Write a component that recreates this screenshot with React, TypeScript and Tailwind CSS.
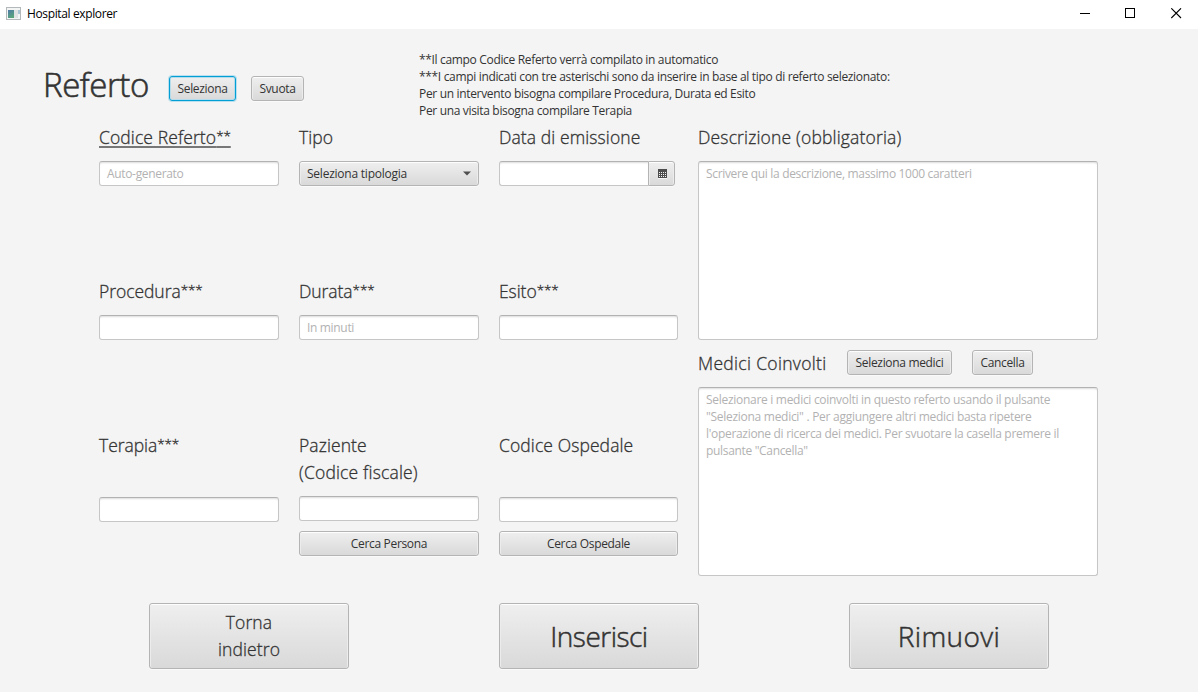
import type { ReactNode } from "react";

const fill = "rounded-[3px] bg-linear-to-b from-[#efefef] to-[#d9d9d9]";

const edge =
  "border border-[#b4b4b4] shadow-[inset_0_1px_0_#fdfdfd,inset_1px_0_0_#ececec,inset_-1px_0_0_#ececec,0_1px_0_#fafafa]";

const focused = "border border-[#039ed3] shadow-[inset_0_0_0_1px_#b5dcea,0_0_0_1px_#b9e0ee]";

const field =
  "border border-[#c6c6c6] border-t-[#b2b2b2] rounded-[3px] bg-white shadow-[inset_0_2px_2px_-1px_#dcdcdc]";

const small = "text-[12px] tracking-[-0.33px]";

const medium = "text-[17.5px] leading-[27px] font-light [-webkit-text-stroke:0.3px_#333333]";

const large = "text-[28px] font-light [-webkit-text-stroke:0.5px_#333333]";

function Button({ children, className = "", focus = false }: { children: ReactNode; className?: string; focus?: boolean }) {
  return (
    <button
      className={`${fill} ${focus ? focused : edge} ${small} flex h-[25px] shrink-0 items-center justify-center whitespace-nowrap ${className}`}
    >
      {children}
    </button>
  );
}

function Stars({ children }: { children: string }) {
  return <span className="align-[2.6px] text-[13.5px] leading-none tracking-[-0.15px]">{children}</span>;
}

function Label({
  children,
  stars = "",
  spacing = "tracking-[0.1px]",
  className = "",
}: {
  children: ReactNode;
  stars?: string;
  spacing?: string;
  className?: string;
}) {
  return (
    <div className={`${medium} ${spacing} h-[27px] whitespace-nowrap ${className}`}>
      {children}
      {stars && <Stars>{stars}</Stars>}
    </div>
  );
}

function TextField({ hint = "", className = "" }: { hint?: string; className?: string }) {
  return (
    <div className={`${field} ${small} flex h-[25px] shrink-0 items-center px-[7px] pt-px text-[#b2b2b2] ${className}`}>
      {hint}
    </div>
  );
}

function TitleBar() {
  return (
    <header className="flex h-[29px] shrink-0 items-center bg-white text-black">
      <svg width="15" height="13" viewBox="0 0 15 13" className="mb-[3px] ml-[6px]" shapeRendering="crispEdges">
        <defs>
          <linearGradient id="pane" x1="0" y1="0" x2="0.5" y2="1">
            <stop offset="0" stopColor="#4f79a8" />
            <stop offset="1" stopColor="#58a57c" />
          </linearGradient>
        </defs>
        <rect x="0.5" y="0.5" width="14" height="12" fill="#f3f4f4" stroke="#b3b9bb" />
        <rect x="2" y="3" width="6" height="8" fill="url(#pane)" />
        <rect x="8" y="3" width="4" height="8" fill="#dfe2e3" />
        <rect x="12" y="3" width="2" height="4" fill="#a9c4d2" />
      </svg>
      <span className="mb-[1px] ml-[6px] text-[12px] tracking-[-0.37px]">Hospital explorer</span>
      <div className="mr-[16px] mb-[3px] ml-auto flex items-center">
        <svg width="10" height="11" viewBox="0 0 10 11" shapeRendering="crispEdges">
          <path d="M0 5.5H10" stroke="#000" />
        </svg>
        <svg width="10" height="10" viewBox="0 0 10 10" className="ml-[35px]" shapeRendering="crispEdges">
          <rect x="0.5" y="0.5" width="9" height="9" fill="none" stroke="#000" />
        </svg>
        <svg width="11" height="11" viewBox="0 0 11 11" className="ml-[36px]">
          <path d="M0.3 0.3L10 10M10 0.3L0.3 10" stroke="#000" strokeWidth="1.1" />
        </svg>
      </div>
    </header>
  );
}

function CalendarIcon() {
  return (
    <svg width="9" height="10" viewBox="0 0 9 10" className="ml-px" shapeRendering="crispEdges">
      <rect width="9" height="9" fill="#4c4c4c" />
      {[3, 5, 7].map((y) =>
        [1, 3, 5, 7].map((x) => <rect key={`${x}-${y}`} x={x} y={y} width="1" height="1" fill="#f2f2f2" />),
      )}
      <rect y="9" width="9" height="1" fill="#f4f4f4" />
    </svg>
  );
}

export default function App() {
  return (
    <div className="flex h-[692px] w-[1198px] flex-col overflow-hidden bg-[#f4f4f4] font-['Open_Sans','Noto_Sans',sans-serif] text-[#333333]">
      <TitleBar />

      <section className="flex h-[95px] shrink-0 pl-[43px]">
        <h1 className="mt-[31px] w-[126px] text-[33px] leading-[50px] font-light tracking-[-0.45px] [-webkit-text-stroke:0.6px_#333333]">
          Referto
        </h1>
        <div className="mt-[47px] flex w-[250px] gap-[15px]">
          <Button focus className="w-[67px]">
            Seleziona
          </Button>
          <Button className="w-[53px]">Svuota</Button>
        </div>
        <div className={`${small} mt-[22px] leading-[17px] whitespace-nowrap`}>
          <p>**Il campo Codice Referto verrà compilato in automatico</p>
          <p>***I campi indicati con tre asterischi sono da inserire in base al tipo di referto selezionato:</p>
          <p>Per un intervento bisogna compilare Procedura, Durata ed Esito</p>
          <p>Per una visita bisogna compilare Terapia</p>
        </div>
      </section>

      <main className="flex h-[452px] shrink-0 pl-[99px]">
        <div className="grid w-[599px] grid-cols-[180px_180px_179px] grid-rows-[154px_154px_144px] gap-x-[20px]">
          <div>
            <Label className="mb-[10px]">
              <span className="underline decoration-[#777777] decoration-[1.5px] underline-offset-[2px]">
                Codice Referto<Stars>**</Stars>
              </span>
            </Label>
            <TextField hint="Auto-generato" />
          </div>
          <div>
            <Label className="mb-[10px]">Tipo</Label>
            <div className={`${fill} ${edge} ${small} flex h-[25px] items-center justify-between px-[7px]`}>
              <span className="tracking-[-0.23px]">Seleziona tipologia</span>
              <svg width="8" height="5" viewBox="0 0 8 5">
                <path d="M0 0.5H8L4 4.5Z" fill="#4f4f4f" />
              </svg>
            </div>
          </div>
          <div>
            <Label className="mb-[10px]">Data di emissione</Label>
            <div className="flex w-[176px]">
              <TextField className="w-[149px] rounded-r-none border-r-0 border-[#b4b4b4]" />
              <div className={`${fill} ${edge} flex h-[25px] w-[27px] items-center justify-center rounded-l-none`}>
                <CalendarIcon />
              </div>
            </div>
          </div>

          <div>
            <Label className="mb-[10px]" spacing="tracking-[-0.05px]" stars="***">
              Procedura
            </Label>
            <TextField />
          </div>
          <div>
            <Label className="mb-[10px]" spacing="tracking-[-0.05px]" stars="***">
              Durata
            </Label>
            <TextField hint="In minuti" />
          </div>
          <div>
            <Label className="mb-[10px]" spacing="tracking-[-0.05px]" stars="***">
              Esito
            </Label>
            <TextField />
          </div>

          <div>
            <Label className="mb-[38px]" spacing="tracking-[-0.05px]" stars="***">
              Terapia
            </Label>
            <TextField />
          </div>
          <div>
            <Label>Paziente</Label>
            <Label className="mb-[10px]" spacing="tracking-[0.17px]">
              (Codice fiscale)
            </Label>
            <TextField className="mb-[10px]" />
            <Button className="w-full">Cerca Persona</Button>
          </div>
          <div>
            <Label className="mb-[38px]">Codice Ospedale</Label>
            <TextField className="mb-[9px]" />
            <Button className="w-full">Cerca Ospedale</Button>
          </div>
        </div>

        <div className="flex w-[400px] flex-col">
          <Label className="mb-[10px]" spacing="tracking-[0.17px]">
            Descrizione (obbligatoria)
          </Label>
          <div className={`${field} ${small} h-[179px] px-[7px] pt-[3px] leading-[17px] text-[#b2b2b2]`}>
            Scrivere qui la descrizione, massimo 1000 caratteri
          </div>
          <div className="mt-[10px] mb-[12px] flex h-[25px]">
            <Label className="w-[149px]" spacing="tracking-[0.32px]">
              Medici Coinvolti
            </Label>
            <Button className="w-[105px]">Seleziona medici</Button>
            <Button className="ml-[20px] w-[61px]">Cancella</Button>
          </div>
          <div className={`${field} ${small} h-[189px] px-[7px] pt-[3px] leading-[17px] whitespace-nowrap text-[#b2b2b2]`}>
            <p className="tracking-[-0.29px]">Selezionare i medici coinvolti in questo referto usando il pulsante</p>
            <p className="tracking-[-0.28px]">"Seleziona medici" . Per aggiungere altri medici basta ripetere</p>
            <p className="tracking-[-0.31px]">l'operazione di ricerca dei medici. Per svuotare la casella premere il</p>
            <p>pulsante "Cancella"</p>
          </div>
        </div>
      </main>

      <footer className="mt-[27px] flex gap-[150px] pl-[149px]">
        <button className={`${fill} ${edge} ${medium} h-[66px] w-[200px] tracking-[0.1px]`}>
          Torna
          <br />
          indietro
        </button>
        <button className={`${fill} ${edge} ${large} h-[66px] w-[200px] tracking-[-0.5px]`}>Inserisci</button>
        <button className={`${fill} ${edge} ${large} h-[66px] w-[200px] tracking-[0.4px]`}>Rimuovi</button>
      </footer>
    </div>
  );
}
